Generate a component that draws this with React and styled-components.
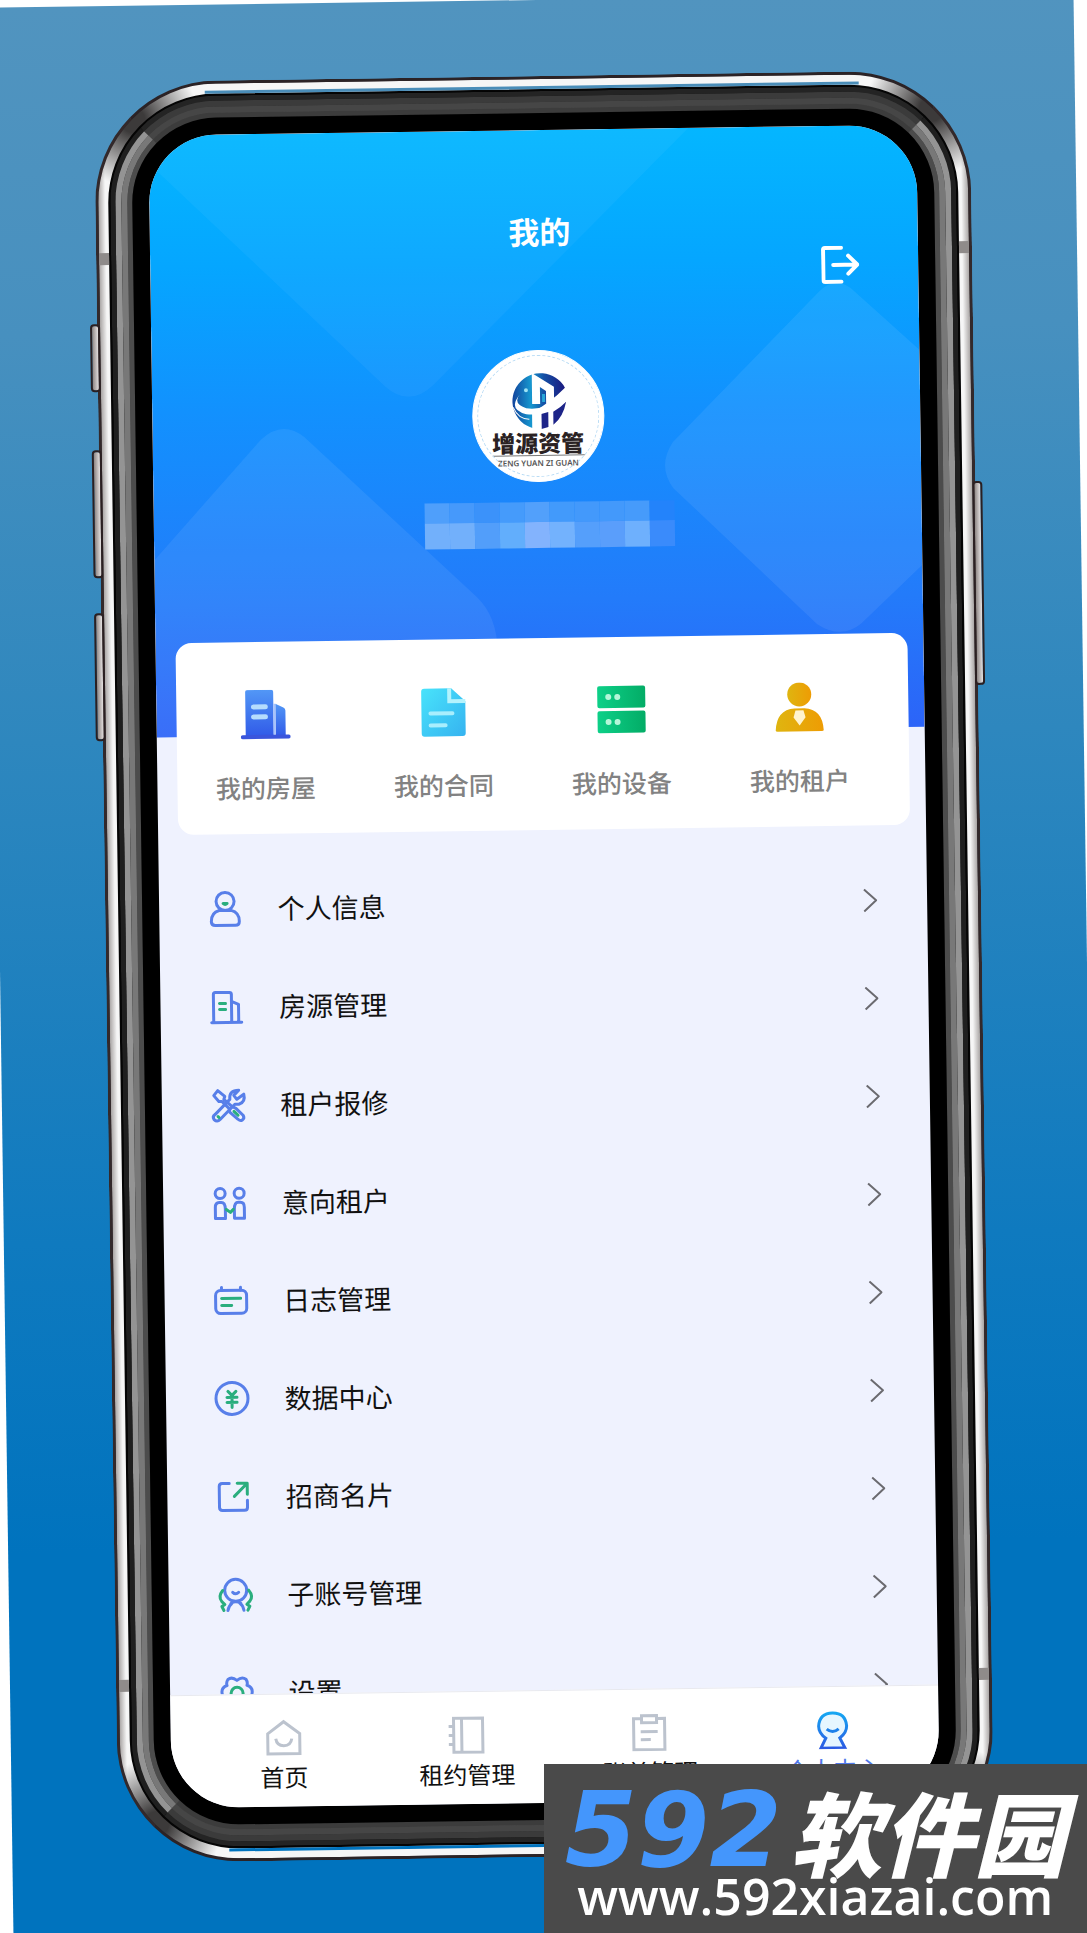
import styled, { createGlobalStyle } from "styled-components"

const quickLinks = [
    { label: "我的房屋", Icon: HouseIcon },
    { label: "我的合同", Icon: ContractIcon },
    { label: "我的设备", Icon: DeviceIcon },
    { label: "我的租户", Icon: TenantIcon },
]

const menu = [
    { label: "个人信息", Icon: PersonIcon },
    { label: "房源管理", Icon: BuildingIcon },
    { label: "租户报修", Icon: RepairIcon },
    { label: "意向租户", Icon: ProspectIcon },
    { label: "日志管理", Icon: LogIcon },
    { label: "数据中心", Icon: DataIcon },
    { label: "招商名片", Icon: ShareIcon },
    { label: "子账号管理", Icon: SubAccountIcon },
    { label: "设置", Icon: SettingsIcon },
]

const tabs = [
    { label: "首页", Icon: HomeTab },
    { label: "租约管理", Icon: LeaseTab },
    { label: "账单管理", Icon: BillTab },
    { label: "个人中心", Icon: MeTab, active: true },
]

const mosaic = [
    "#4f9ffb", "#4699fb", "#3b92fa", "#459bfb", "#52a0fb", "#429afb", "#4399fb", "#4399fb", "#469bfb", "#2383fb",
    "#72b0fb", "#72b0fb", "#529efa", "#62aefc", "#83b3fd", "#73b2fd", "#559ffb", "#5a9efb", "#6eb0fd", "#3a8bfb",
]

export default function App() {
    return (
        <Page>
            <GlobalStyle />
            <Stage>
                <Phone>
                    <SideKey $side="left" $top={242} $size={68} />
                    <SideKey $side="left" $top={368} $size={128} />
                    <SideKey $side="left" $top={531} $size={128} />
                    <SideKey $side="right" $top={411} $size={204} />
                    <Ring $size={3} $radius={122} $cap="#2b2326" $side="#33292b">
                        <Silver>
                            <Antenna $side="left" $edge="top" />
                            <Antenna $side="right" $edge="top" />
                            <Antenna $side="left" $edge="bottom" />
                            <Antenna $side="right" $edge="bottom" />
                            <Slit $edge="top" />
                            <Slit $edge="bottom" />
                            <Ring $size={2} $radius={109} $cap="#050505" $side="#050505">
                                <Ring $size={5} $radius={107} $cap="#242424" $side="#1f1f1f">
                                    <Ring $size={6} $radius={102} $cap="#3b3b3b" $side="#949494">
                                        <Ring $size={6} $radius={96} $cap="#464646" $side="#787878">
                                            <Ring $size={5} $radius={90} $cap="#3c3c3c" $side="#4c4c4c">
                                                <Ring $size={17} $radius={85} $cap="#000" $side="#000">
                                                    <Screen />
                                                </Ring>
                                            </Ring>
                                        </Ring>
                                    </Ring>
                                </Ring>
                            </Ring>
                        </Silver>
                    </Ring>
                </Phone>
            </Stage>
            <Watermark>
                <Brand><b>592</b>软件园</Brand>
                <Site>www.592xiazai.com</Site>
            </Watermark>
        </Page>
    )
}

function Screen() {
    return (
        <ScreenBox>
            <Content>
                <Header>
                    <HeaderArt viewBox="0 0 768 602" preserveAspectRatio="none" aria-hidden="true">
                        <path opacity="0.6" d="M0 28 L233 254 Q257 276 281 254 L540 0 H0Z" />
                        <path d="M0 425 L108 306 Q130 286 152 304 L322 466 Q342 486 342 520 V602 H0Z" />
                        <path d="M668 166 Q686 148 704 166 L768 225 V440 L706 498 Q686 514 662 498 L520 360 Q504 338 520 314Z" />
                    </HeaderArt>
                    <Title>我的</Title>
                    <Toolbar>
                        <Logout type="button" aria-label="退出登录"><LogoutIcon /></Logout>
                    </Toolbar>
                    <Avatar>
                        <Emblem />
                        <AvatarName>增源资管</AvatarName>
                        <AvatarSub>ZENG YUAN ZI GUAN</AvatarSub>
                    </Avatar>
                    <Mosaic>
                        {mosaic.map((color, i) => <Tile key={i} $color={color} />)}
                    </Mosaic>
                </Header>
                <Card>
                    {quickLinks.map(({ label, Icon }) => (
                        <QuickLink key={label} href="#"><Icon />{label}</QuickLink>
                    ))}
                </Card>
                <Menu>
                    {menu.map(({ label, Icon }) => (
                        <li key={label}>
                            <MenuRow href="#">
                                <MenuIcon viewBox="0 0 34 34"><Icon /></MenuIcon>
                                <span>{label}</span>
                                <Chevron viewBox="0 0 14 24"><path d="M1 1 L13 12 L1 23" /></Chevron>
                            </MenuRow>
                        </li>
                    ))}
                </Menu>
            </Content>
            <TabBar>
                {tabs.map(({ label, Icon, active }) => (
                    <Tab key={label} href="#" $active={active}>
                        <TabIcon viewBox="0 0 38 38"><Icon /></TabIcon>
                        {label}
                    </Tab>
                ))}
            </TabBar>
        </ScreenBox>
    )
}

/* header icons */

function LogoutIcon() {
    return (
        <svg width="38" height="38" viewBox="0 0 38 38" fill="none" stroke="#fff" strokeWidth="4" strokeLinecap="round" strokeLinejoin="round">
            <path d="M20 2 H4 Q2 2 2 4 V34 Q2 36 4 36 H20" />
            <path d="M12 19 H35 M27 10 L36 19 L27 28" />
        </svg>
    )
}

function Emblem() {
    return (
        <svg width="60" height="62" viewBox="0 0 60 62">
            <defs>
                <linearGradient id="emblem" x1="0" y1="0" x2="1" y2="0">
                    <stop offset="0" stopColor="#12439c" />
                    <stop offset=".35" stopColor="#1697cf" />
                    <stop offset=".6" stopColor="#1450a5" />
                    <stop offset="1" stopColor="#1b1a80" />
                </linearGradient>
            </defs>
            <path d="M57 19 A28 28 0 1 0 24 59 V43 Q42 34 57 19Z" fill="url(#emblem)" />
            <path d="M58 33 Q52 39 45 43 V56 Q55 48 58 33Z M33 45 L40 43 V58 L33 60Z" fill="#1d2488" />
            <path d="M24 4 L46 18 V32 L38 35 V22 L32 18 V35 H24Z" fill="#fff" />
            <path d="M34 25 H37 V33 H34Z" fill="#27a6d8" />
            <path d="M12 25 Q4 34 18 39 Q34 42 60 29 Q40 48 18 45 Q-1 40 12 25Z" fill="#fff" />
            <path d="M5 38 Q10 50 21 50" fill="none" stroke="#fff" strokeWidth="1" />
            <path d="M24 43 H33 V61 H24Z" fill="#fff" />
            <circle cx="18" cy="21" r="2" fill="#9de2f4" />
        </svg>
    )
}

/* card icons */

function HouseIcon() {
    return (
        <svg width="50" height="50" viewBox="0 0 50 50">
            <defs>
                <linearGradient id="house" x1="0" y1="0" x2="0" y2="1">
                    <stop offset="0" stopColor="#5297f6" />
                    <stop offset="1" stopColor="#315be8" />
                </linearGradient>
            </defs>
            <path d="M5 2 Q5 0 7 0 H31 Q33 0 33 2 V46 H5Z" fill="url(#house)" />
            <path d="M35 14 L43 18 Q45 19 45 21 V46 H35Z" fill="url(#house)" />
            <rect x="33" y="14" width="2" height="31" fill="#a7c3fb" />
            <rect y="45" width="50" height="4" rx="2" fill="#3a55dc" />
            <path d="M13 17 H25 M13 27 H25" stroke="#b5dcfd" strokeWidth="5" strokeLinecap="round" />
        </svg>
    )
}

function ContractIcon() {
    return (
        <svg width="50" height="50" viewBox="0 0 50 50">
            <defs>
                <linearGradient id="contract" x1="0" y1="0" x2="1" y2="1">
                    <stop offset="0" stopColor="#48e3fb" />
                    <stop offset="1" stopColor="#36b3f0" />
                </linearGradient>
            </defs>
            <path d="M3 4 Q3 1 6 1 H33 L47 14 V46 Q47 49 44 49 H6 Q3 49 3 46Z" fill="url(#contract)" />
            <path d="M31 1 V14 H47" fill="none" stroke="#b4f3fd" strokeWidth="4" />
            <path d="M12 26 H34 M12 38 H27" stroke="#a9eefd" strokeWidth="4" strokeLinecap="round" />
        </svg>
    )
}

function DeviceIcon() {
    return (
        <svg width="50" height="50" viewBox="0 0 50 50">
            <defs>
                <linearGradient id="device" x1="0" y1="0" x2="1" y2="0">
                    <stop offset="0" stopColor="#0dd088" />
                    <stop offset="1" stopColor="#03ac66" />
                </linearGradient>
            </defs>
            <rect x="1" y="1" width="48" height="22" rx="2" fill="url(#device)" />
            <rect x="1" y="26" width="48" height="22" rx="2" fill="url(#device)" />
            <g fill="#b4f6d9">
                <circle cx="12" cy="12" r="3" /><circle cx="21" cy="12" r="3" />
                <circle cx="12" cy="37" r="3" /><circle cx="21" cy="37" r="3" />
            </g>
        </svg>
    )
}

function TenantIcon() {
    return (
        <svg width="50" height="50" viewBox="0 0 50 50">
            <defs>
                <linearGradient id="tenant" x1="0" y1="0" x2="1" y2="0">
                    <stop offset="0" stopColor="#dfb510" />
                    <stop offset="1" stopColor="#ee9c04" />
                </linearGradient>
            </defs>
            <circle cx="25" cy="12" r="12" fill="url(#tenant)" />
            <path d="M1 48 Q2 27 20 26 H30 Q48 27 49 48 Q49 49 47 49 H3 Q1 49 1 48Z" fill="url(#tenant)" />
            <path d="M21 28 H29 L31 35 L25 43 L19 35Z" fill="#fff3cf" />
        </svg>
    )
}

/* menu icons */

function PersonIcon() {
    return (
        <>
            <circle cx="16" cy="9" r="9" />
            <path d="M10 18 H22 Q30 20 30 29 Q30 33 26 33 H6 Q2 33 2 29 Q2 20 10 18Z" />
            <path className="green" d="M14 11 Q16 13 18 11Z" />
        </>
    )
}

function BuildingIcon() {
    return (
        <>
            <path d="M3 32 V4 Q3 2 5 2 H19 Q21 2 21 4 V32 M21 11 L28 14 V32 M1 32 H31" />
            <path className="green" d="M9 13 H15 M9 19 H15" />
        </>
    )
}

function RepairIcon() {
    return (
        <>
            <path d="M6 2 L13 8 L12 11 L20 18 L24 20 L31 27 Q33 30 30 32 Q28 33 26 31 L18 24 L17 20 L10 13 L7 13 L2 7Z" />
            <path d="M27 2 L22 7 L25 11 L32 6 Q34 14 27 16 L23 16 L8 31 Q5 34 2 31 Q0 28 3 26 L18 11 Q17 2 27 2Z" />
            <path className="green" d="M22 23 L26 27 M6 28 L7 29" />
        </>
    )
}

function ProspectIcon() {
    return (
        <>
            <circle cx="7" cy="7" r="5" /><circle cx="26" cy="7" r="5" />
            <path d="M2 32 V21 Q2 16 6 16 H8 Q12 16 12 23 V32Z" />
            <path d="M31 32 V21 Q31 16 27 16 H25 Q21 16 21 23 V32Z" />
            <path className="green" d="M13 23 L17 26 L20 23" />
        </>
    )
}

function LogIcon() {
    return (
        <>
            <rect x="1" y="6" width="31" height="23" rx="5" />
            <path d="M7 3 V6 M26 3 V6" />
            <path className="green" d="M7 14 H26 M7 21 H17" />
        </>
    )
}

function DataIcon() {
    return (
        <>
            <circle cx="16" cy="16" r="16" />
            <path className="green" d="M12 9 L16 13 L20 9 M11 15 H21 M11 20 H21 M16 14 V25" />
        </>
    )
}

function ShareIcon() {
    return (
        <>
            <path d="M12 3 H5 Q2 3 2 6 V27 Q2 30 5 30 H27 Q30 30 30 27 V20" />
            <path className="green" d="M17 16 L29 4 M20 3 H30 V14" />
        </>
    )
}

function SubAccountIcon() {
    return (
        <>
            <circle cx="17" cy="12" r="11" />
            <path d="M14 14 Q17 17 20 14 M9 32 Q10 27 13 25 M25 32 Q24 27 21 25 M12 25 Q17 22 22 25" />
            <path className="green" d="M4 12 Q-1 18 3 23 L6 26 L3 28 L5 32 M30 12 Q35 18 31 23 L28 26 L31 28 L29 32" />
        </>
    )
}

function SettingsIcon() {
    return (
        <>
            <path d="M17 4 Q22 0 26 3 Q28 6 27 9 Q33 11 32 17 Q31 23 26 25 Q25 31 17 30 Q9 31 8 25 Q3 23 2 17 Q1 11 7 9 Q6 6 8 3 Q12 0 17 4Z" />
            <circle className="green" cx="17" cy="17" r="6" />
        </>
    )
}

/* tab icons */

function HomeTab() {
    return <path d="M3 15 L19 3 L35 15 V35 H3Z M11 20 Q12 27 19 27 Q26 27 27 20" />
}

function LeaseTab() {
    return <path d="M6 2 H35 V36 H6Z M14 2 V36 M1 10 H6 M1 19 H6 M1 28 H6" />
}

function BillTab() {
    return <path d="M10 5 H3 V36 H34 V5 H27 M11 2 H26 V9 H11Z M10 18 H27 M10 26 H20" />
}

function MeTab() {
    return (
        <>
            <defs>
                <linearGradient id="me" x1="0" y1="0" x2="0" y2="1">
                    <stop offset="0" stopColor="#16a6f2" />
                    <stop offset="1" stopColor="#2b5be3" />
                </linearGradient>
            </defs>
            <path d="M12 27 Q5 22 5 15 Q6 2 19 2 Q32 2 33 15 Q33 22 26 27 L31 37 H7Z" fill="#e6f6ff" stroke="url(#me)" />
            <path d="M13 18 Q19 23 25 18" stroke="#1c80ea" />
        </>
    )
}

const GlobalStyle = createGlobalStyle`
*{
    box-sizing: border-box;
}

body{
    margin: 0;
    background-color: #ffffff;
    font-family: "Noto Sans", "Noto Sans CJK SC", sans-serif;
}

h1, p, ul{
    margin: 0;
    padding: 0;
}

ul{
    list-style: none;
}

a{
    color: inherit;
    text-decoration: none;
}

svg{
    display: block;
    flex-shrink: 0;
}
`

const Page = styled.div`
position: relative;
height: 100vh;
overflow: hidden;
`

const Stage = styled.div`
display: flex;
justify-content: center;
height: 100%;
padding: 76px 24px;
background: linear-gradient(#5194bf 0%, #4790bf 17%, #2e87be 38%, #0f7abf 64%, #0073be 80%);
transform: rotate(-0.8deg);
`

const Phone = styled.div`
position: relative;
display: flex;
width: 100%;
max-width: 876px;
`

const SideKey = styled.span`
position: absolute;
top: ${(p) => p.$top}px;
${(p) => p.$side}: -7px;
width: 10px;
height: ${(p) => p.$size}px;
border: 2px solid #2b2022;
border-radius: 4px;
background: linear-gradient(90deg, #8d8583, #e6e2e2);
`

const Ring = styled.div`
display: flex;
flex: 1;
min-width: 0;
border-style: solid;
border-width: ${(p) => p.$size}px;
border-color: ${(p) => p.$cap} ${(p) => p.$side};
border-radius: ${(p) => p.$radius}px;
background-color: ${(p) => p.$cap};
`

const Silver = styled.div`
position: relative;
display: flex;
flex: 1;
min-width: 0;
padding: 10px;
border-radius: 119px;
background:
    radial-gradient(circle at 36px 36px, #3c3a3a 12px, transparent 66px),
    radial-gradient(circle at calc(100% - 36px) 36px, #3c3a3a 12px, transparent 66px),
    radial-gradient(circle at 36px calc(100% - 36px), #3c3a3a 12px, transparent 66px),
    radial-gradient(circle at calc(100% - 36px) calc(100% - 36px), #3c3a3a 12px, transparent 66px),
    linear-gradient(90deg, #a8a4a3, #f6f6f6 7px, #f6f6f6 calc(100% - 7px), #a8a4a3);
`

const Antenna = styled.span`
position: absolute;
${(p) => p.$edge}: 168px;
${(p) => p.$side}: 0;
width: 10px;
height: 12px;
background-color: #8f8b8a;
`

const Slit = styled.span`
position: absolute;
${(p) => p.$edge}: 7px;
left: 108px;
right: 108px;
height: 3px;
background-color: ${(p) => (p.$edge === "top" ? "#4a8db8" : "#0073be")};
`

const ScreenBox = styled.div`
display: flex;
flex-direction: column;
flex: 1;
min-width: 0;
border-radius: 68px;
background-color: #eff2fe;
overflow: hidden;
`

const Content = styled.main`
flex: 1;
min-height: 0;
overflow: hidden;
`

const Header = styled.header`
position: relative;
display: flex;
flex-direction: column;
align-items: center;
height: 602px;
padding: 84px 16px 0 20px;
background: linear-gradient(#04b6ff 0%, #05a6ff 22%, #1291fe 46%, #237bfa 78%, #2c64f8 100%);
`

const HeaderArt = styled.svg`
position: absolute;
inset: 0;
width: 100%;
height: 100%;
fill: rgba(255, 255, 255, 0.07);
`

const Title = styled.h1`
position: relative;
padding-left: 8px;
font-size: 31px;
font-weight: 700;
line-height: 36px;
color: #ffffff;
`

const Toolbar = styled.div`
position: relative;
display: flex;
justify-content: flex-end;
width: 100%;
padding-right: 43px;
`

const Logout = styled.button`
padding: 0;
border: none;
background: none;
cursor: pointer;
`

const Avatar = styled.div`
position: relative;
display: flex;
flex-direction: column;
align-items: center;
width: 132px;
height: 132px;
margin-top: 62px;
padding-top: 18px;
border: 1px solid #ffffff;
border-radius: 50%;
background-color: #ffffff;
overflow: hidden;

&::after{
    content: "";
    position: absolute;
    inset: 4px;
    border: 1px dashed #b9dcf5;
    border-radius: 50%;
}
`

const AvatarName = styled.p`
border-bottom: 1px solid #777777;
font-size: 23px;
font-weight: 900;
line-height: 24px;
color: #2a2223;
`

const AvatarSub = styled.p`
font-size: 8px;
font-weight: 600;
line-height: 14px;
white-space: nowrap;
color: #555555;
`

const Mosaic = styled.div`
position: relative;
display: grid;
grid-template-columns: repeat(10, 25px);
grid-template-rows: 20px 26px;
margin-top: 20px;
margin-left: 20px;
`

const Tile = styled.span`
background-color: ${(p) => p.$color};
`

const Card = styled.nav`
position: relative;
display: grid;
grid-template-columns: repeat(4, 1fr);
margin: -94px 16px 0 20px;
padding: 48px 20px 28px 0;
border-radius: 16px;
background-color: #ffffff;
`

const QuickLink = styled.a`
display: flex;
flex-direction: column;
align-items: center;
gap: 30px;
font-size: 25px;
font-weight: 500;
line-height: 36px;
color: #828282;
`

const Menu = styled.ul`
margin-top: 26px;
`

const MenuRow = styled.a`
display: flex;
align-items: center;
height: 98px;
padding: 0 50px;
font-size: 27px;
line-height: 36px;
color: #111111;

span{
    flex: 1;
    margin-left: 35px;
}
`

const MenuIcon = styled.svg`
width: 34px;
height: 34px;
fill: none;
stroke: #587fe9;
stroke-width: 3;
stroke-linecap: round;
stroke-linejoin: round;
overflow: visible;

.green{
    stroke: #2aae7e;
}
`

const Chevron = styled.svg`
width: 14px;
height: 24px;
fill: none;
stroke: #6b6b70;
stroke-width: 2;
`

const TabBar = styled.nav`
display: grid;
grid-template-columns: repeat(4, 1fr);
height: 113px;
padding: 24px 14px 0 22px;
border-top: 1px solid #e8e9ef;
background-color: #ffffff;
`

const Tab = styled.a`
display: flex;
flex-direction: column;
align-items: center;
gap: 7px;
font-size: 24px;
line-height: 28px;
color: ${(p) => (p.$active ? "#4f78ea" : "#111111")};
`

const TabIcon = styled.svg`
width: 38px;
height: 38px;
fill: none;
stroke: #bcc3ce;
stroke-width: 3;
`

const Watermark = styled.footer`
position: absolute;
right: 0;
bottom: 0;
display: flex;
flex-direction: column;
align-items: center;
width: 50%;
height: 169px;
padding-top: 26px;
background-color: #4a4a4a;
color: #ffffff;
white-space: nowrap;
`

const Brand = styled.p`
display: flex;
align-items: center;
gap: 8px;
height: 80px;
font-family: "Noto Sans CJK SC", sans-serif;
font-size: 92px;
font-style: italic;
font-weight: 900;
line-height: 80px;

b{
    font-family: "DejaVu Sans", sans-serif;
    font-size: 104px;
    color: #4496fc;
}
`

const Site = styled.p`
font-family: "Open Sans", sans-serif;
font-size: 50px;
font-weight: 600;
line-height: 52px;
`
